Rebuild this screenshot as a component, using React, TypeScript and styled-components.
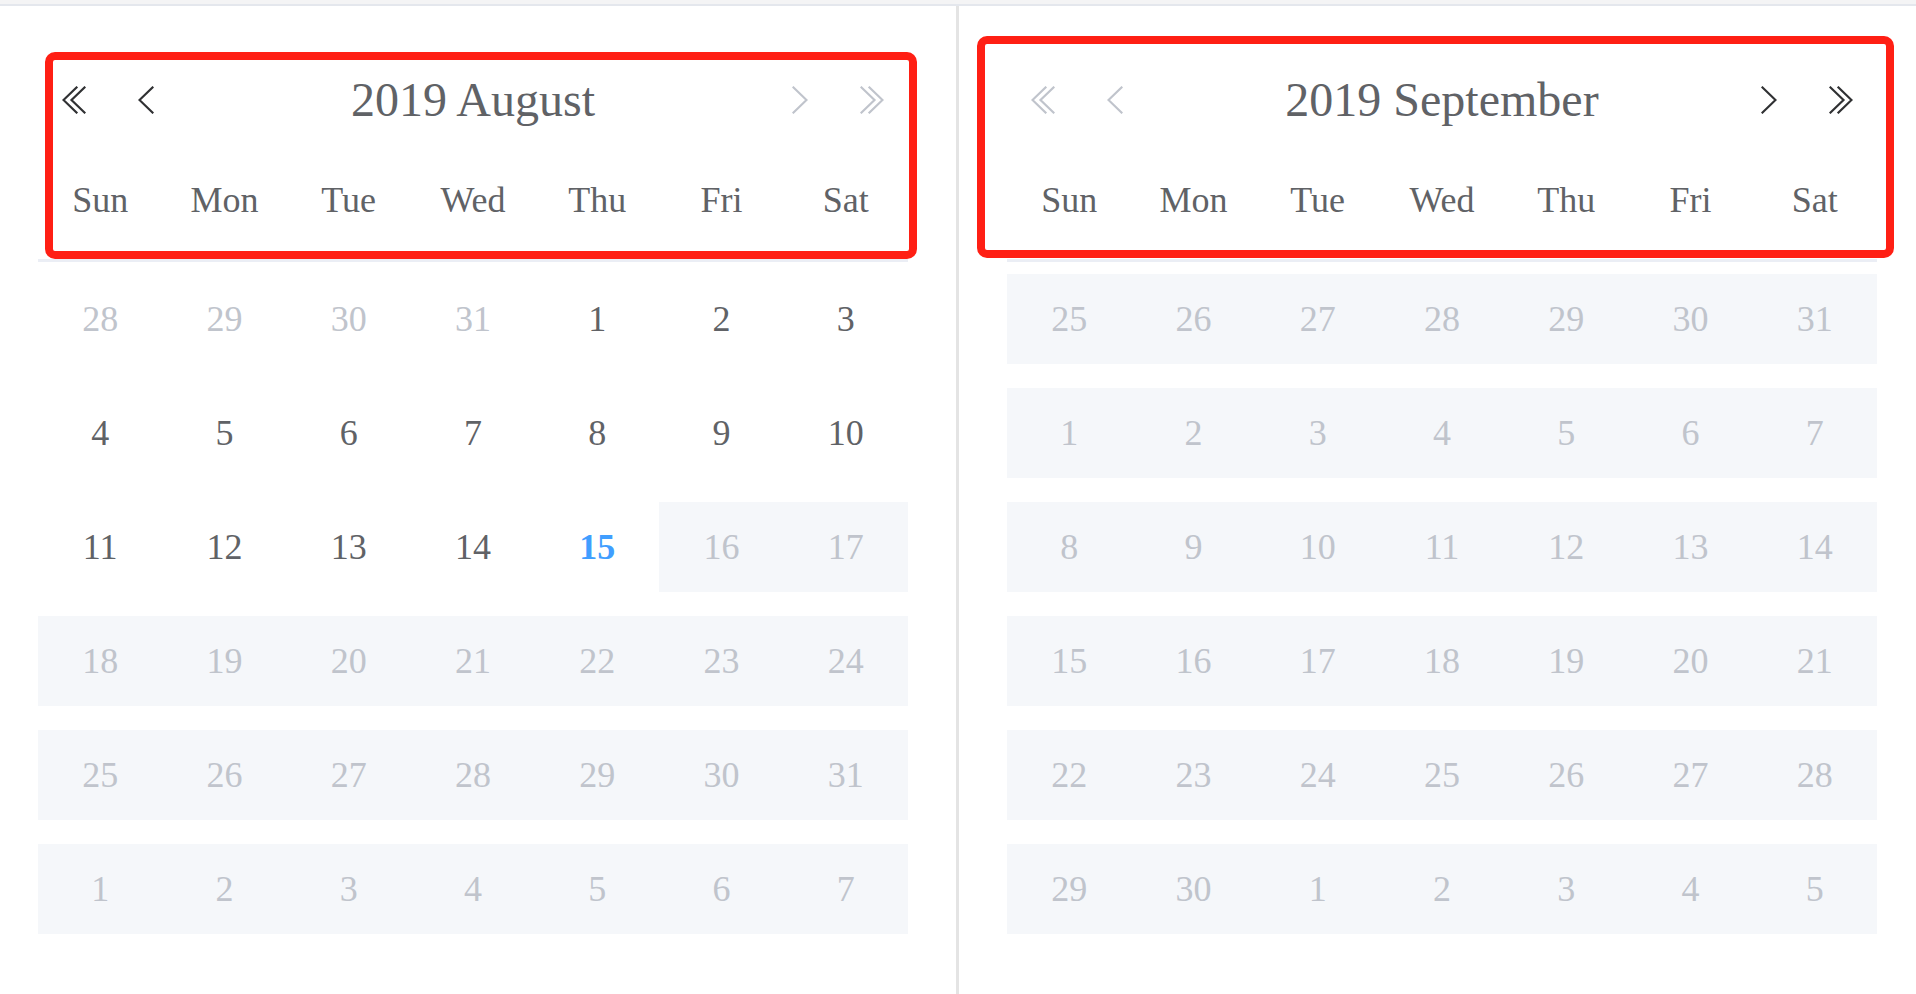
import React from 'react';
import styled, { createGlobalStyle, css } from 'styled-components';

const GlobalStyle = createGlobalStyle`
  html, body {
    margin: 0;
    padding: 0;
    background: #ffffff;
    overflow: hidden;
    font-family: "Liberation Serif", "Times New Roman", serif;
  }
`;

const Page = styled.div`
  width: 1916px;
  height: 994px;
  overflow: hidden;
`;

const TopStrip = styled.div`
  height: 4px;
  background: #f4f4f5;
  border-bottom: 2px solid #e4e7ed;
`;

const Panels = styled.div`
  display: flex;
  align-items: stretch;
  height: calc(100% - 6px);
`;

const Panel = styled.section<{ $side: 'left' | 'right' }>`
  position: relative;
  flex: none;
  box-sizing: border-box;
  width: ${({ $side }) => ($side === 'left' ? '959px' : '957px')};
  ${({ $side }) =>
    $side === 'left'
      ? css`
          padding: 52px 48px 0 38px;
          border-right: 3px solid #e4e4e4;
        `
      : css`
          padding: 52px 0 0 48px;
        `}
`;

const Content = styled.div`
  width: 870px;
`;

const Header = styled.div`
  display: grid;
  grid-template-columns: 1fr auto 1fr;
  align-items: center;
  height: 84px;
`;

const NavGroup = styled.div<{ $align: 'start' | 'end' }>`
  display: flex;
  align-items: center;
  justify-content: ${({ $align }) => ($align === 'start' ? 'flex-start' : 'flex-end')};
  gap: 52px;
  padding: 0 24px;
`;

const IconButton = styled.button<{ $disabled?: boolean }>`
  display: flex;
  align-items: center;
  padding: 0;
  border: 0;
  background: transparent;
  color: ${({ $disabled }) => ($disabled ? '#c0c4cc' : '#303133')};
  cursor: ${({ $disabled }) => ($disabled ? 'not-allowed' : 'pointer')};
`;

const Title = styled.div`
  font-size: 48px;
  line-height: 84px;
  color: #606266;
  white-space: nowrap;
`;

const WeekRow = styled.div`
  display: grid;
  grid-template-columns: repeat(7, 1fr);
  border-bottom: 3px solid #ebeef5;
`;

const WeekDay = styled.div`
  padding: 15px 0;
  line-height: 87px;
  font-size: 36px;
  color: #606266;
  text-align: center;
`;

const DateGrid = styled.div`
  display: grid;
  grid-template-columns: repeat(7, 1fr);
`;

const Cell = styled.div`
  padding: 12px 0;
`;

type Kind = 'normal' | 'muted' | 'today';

const CellInner = styled.div<{ $kind: Kind; $disabled: boolean }>`
  height: 90px;
  line-height: 90px;
  text-align: center;
  font-size: 36px;
  background: ${({ $disabled }) => ($disabled ? '#f5f7fa' : 'transparent')};
  color: ${({ $kind }) =>
    $kind === 'today' ? '#409eff' : $kind === 'muted' ? '#c0c4cc' : '#606266'};
  font-weight: ${({ $kind }) => ($kind === 'today' ? 700 : 400)};
`;

const Annotation = styled.div<{ $left: number; $top: number; $w: number; $h: number }>`
  position: absolute;
  left: ${({ $left }) => $left}px;
  top: ${({ $top }) => $top}px;
  width: ${({ $w }) => $w}px;
  height: ${({ $h }) => $h}px;
  box-sizing: border-box;
  border: 8px solid #ff1f14;
  border-radius: 10px;
  pointer-events: none;
`;

const SingleArrow = ({ dir }: { dir: 'left' | 'right' }) => (
  <svg width="16" height="28" viewBox="0 0 16 28" fill="none" stroke="currentColor" strokeWidth="2.2" strokeLinecap="square">
    {dir === 'left' ? <polyline points="14.5,1.5 1.5,14 14.5,26.5" /> : <polyline points="1.5,1.5 14.5,14 1.5,26.5" />}
  </svg>
);

const DoubleArrow = ({ dir }: { dir: 'left' | 'right' }) => (
  <svg width="24" height="28" viewBox="0 0 24 28" fill="none" stroke="currentColor" strokeWidth="2.2" strokeLinecap="square">
    {dir === 'left' ? (
      <>
        <polyline points="14.5,1.5 1.5,14 14.5,26.5" />
        <polyline points="22.5,1.5 9.5,14 22.5,26.5" />
      </>
    ) : (
      <>
        <polyline points="1.5,1.5 14.5,14 1.5,26.5" />
        <polyline points="9.5,1.5 22.5,14 9.5,26.5" />
      </>
    )}
  </svg>
);

type Day = { n: number; kind: Kind; disabled: boolean };

const WEEKDAYS = ['Sun', 'Mon', 'Tue', 'Wed', 'Thu', 'Fri', 'Sat'];

// August 2019, today = 15th; later days disabled
const august: Day[] = [
  ...[28, 29, 30, 31].map((n) => ({ n, kind: 'muted' as Kind, disabled: false })),
  ...Array.from({ length: 31 }, (_, i) => {
    const n = i + 1;
    if (n < 15) return { n, kind: 'normal' as Kind, disabled: false };
    if (n === 15) return { n, kind: 'today' as Kind, disabled: false };
    return { n, kind: 'muted' as Kind, disabled: true };
  }),
  ...Array.from({ length: 7 }, (_, i) => ({ n: i + 1, kind: 'muted' as Kind, disabled: true })),
];

const september: Day[] = [
  ...[25, 26, 27, 28, 29, 30, 31],
  ...Array.from({ length: 30 }, (_, i) => i + 1),
  ...[1, 2, 3, 4, 5],
].map((n) => ({ n, kind: 'muted' as Kind, disabled: true }));

type CalendarProps = {
  title: string;
  days: Day[];
  prevDisabled?: boolean;
  nextDisabled?: boolean;
};

const Calendar: React.FC<CalendarProps> = ({ title, days, prevDisabled, nextDisabled }) => (
  <Content>
    <Header>
      <NavGroup $align="start">
        <IconButton $disabled={prevDisabled}>
          <DoubleArrow dir="left" />
        </IconButton>
        <IconButton $disabled={prevDisabled}>
          <SingleArrow dir="left" />
        </IconButton>
      </NavGroup>
      <Title>{title}</Title>
      <NavGroup $align="end">
        <IconButton $disabled={nextDisabled}>
          <SingleArrow dir="right" />
        </IconButton>
        <IconButton $disabled={nextDisabled}>
          <DoubleArrow dir="right" />
        </IconButton>
      </NavGroup>
    </Header>
    <WeekRow>
      {WEEKDAYS.map((d) => (
        <WeekDay key={d}>{d}</WeekDay>
      ))}
    </WeekRow>
    <DateGrid>
      {days.map((d, i) => (
        <Cell key={i}>
          <CellInner $kind={d.kind} $disabled={d.disabled}>
            {d.n}
          </CellInner>
        </Cell>
      ))}
    </DateGrid>
  </Content>
);

const App: React.FC = () => (
  <>
    <GlobalStyle />
    <Page>
      <TopStrip />
      <Panels>
        <Panel $side="left">
          <Calendar title="2019 August" days={august} nextDisabled />
          <Annotation $left={45} $top={46} $w={872} $h={207} />
        </Panel>
        <Panel $side="right">
          <Calendar title="2019 September" days={september} prevDisabled />
          <Annotation $left={18} $top={30} $w={917} $h={222} />
        </Panel>
      </Panels>
    </Page>
  </>
);

export default App;
